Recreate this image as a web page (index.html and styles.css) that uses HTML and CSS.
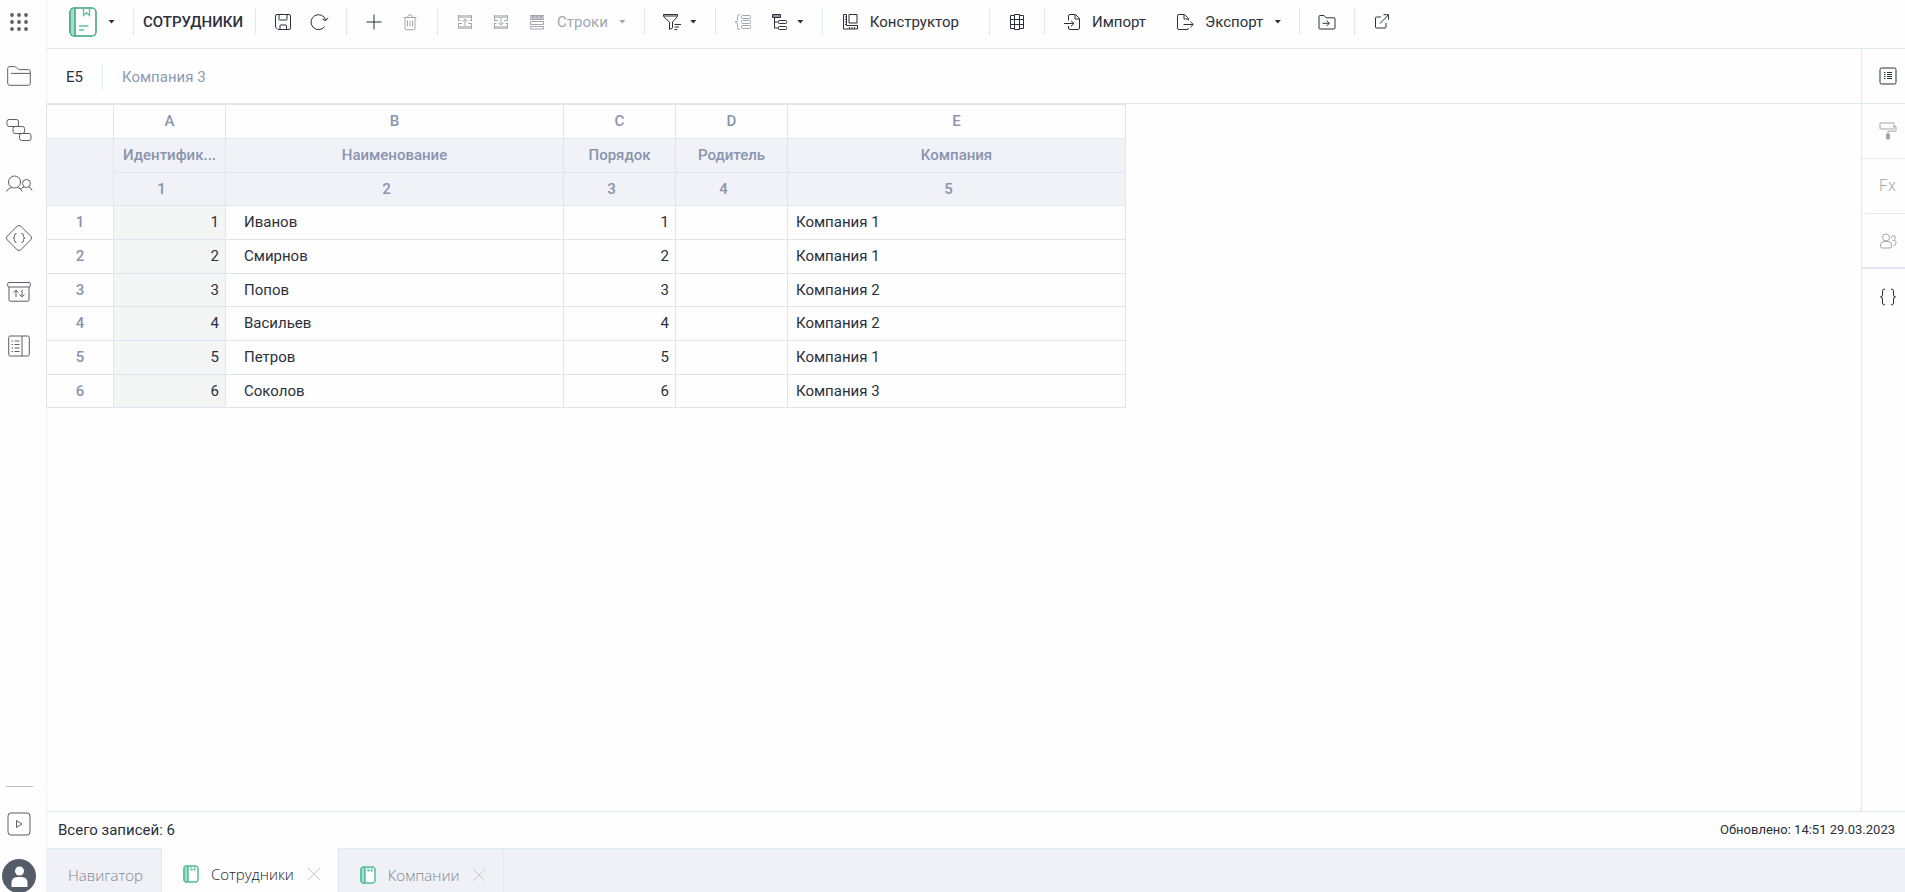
FILE: index.html
```
<!DOCTYPE html>
<html lang="ru">
<head>
<meta charset="UTF-8">
<meta name="viewport" content="width=device-width, initial-scale=1.0">
<title>Сотрудники</title>
<link rel="stylesheet" href="styles.css">
</head>
<body>
<!-- Left navigation -->
<nav class="sidebar">
<button class="side-btn side-apps" aria-label="Приложения"><svg width="18" height="18" viewBox="0 0 18 18"><circle cx="2" cy="2" r="1.9"/><circle cx="9" cy="2" r="1.9"/><circle cx="16" cy="2" r="1.9"/><circle cx="2" cy="9" r="1.9"/><circle cx="9" cy="9" r="1.9"/><circle cx="16" cy="9" r="1.9"/><circle cx="2" cy="16" r="1.9"/><circle cx="9" cy="16" r="1.9"/><circle cx="16" cy="16" r="1.9"/></svg></button>
<button class="side-btn" aria-label="Файлы"><svg width="26" height="26" viewBox="0 0 26 26"><path d="M1.7 20.3V5.6q0-2 2-2h4.500q1.200 0 2.200 1l1.300 1.200q.8.800 2 .8h8.600q2 0 2 2v11.700q0 2-2 2H3.700q-2 0-2-2zM5 10.400h19"/></svg></button>
<button class="side-btn" aria-label="Схемы"><svg width="26" height="26" viewBox="0 0 26 26"><rect x="1" y="2.500" width="11.500" height="7" rx="2"/><rect x="7" y="9.500" width="11.500" height="7" rx="2"/><rect x="13.500" y="16.500" width="11.500" height="7" rx="2"/></svg></button>
<button class="side-btn" aria-label="Пользователи"><svg width="28" height="26" viewBox="0 0 28 26"><circle cx="9.500" cy="11" r="6"/><circle cx="21.500" cy="12.500" r="4"/><path d="M1.500 20.500q1.500-3.500 5-4M12.500 16.500q3.500.5 4.700 4M15.500 18.500q1-2 3.500-2.500M24 16q2.200.8 3 3.500"/></svg></button>
<button class="side-btn" aria-label="Скрипты"><svg width="28" height="28" viewBox="0 0 28 28"><path d="M12.200 2.200q1.800-1.600 3.600 0l10 10q1.600 1.800 0 3.600l-10 10q-1.800 1.600-3.600 0l-10-10q-1.600-1.800 0-3.600z"/><path d="M11.500 9.500q-2 0-2 1.700v1.300q0 1.500-1.500 1.500 1.500 0 1.500 1.500v1.300q0 1.700 2 1.700M16.500 9.500q2 0 2 1.700v1.300q0 1.500 1.500 1.500-1.500 0-1.500 1.500v1.300q0 1.700-2 1.700"/></svg></button>
<button class="side-btn" aria-label="Обмен"><svg width="26" height="26" viewBox="0 0 26 26"><rect x="1.700" y="3.500" width="22.600" height="4.500" rx="1.200"/><path d="M3 8v13q0 1.200 1.200 1.200h17.600q1.200 0 1.200-1.200V8M10 18v-6.500M7.500 13.500l2.500-2.300 2.500 2.300M16 11v6.500M13.500 15.500l2.500 2.300 2.500-2.300"/></svg></button>
<button class="side-btn" aria-label="Справочник"><svg width="26" height="26" viewBox="0 0 26 26"><rect x="2.700" y="3" width="20.600" height="20" rx="1.500"/><path d="M16 3v20"/><path d="M5.500 8h1.500M8.500 8h5M5.500 11.500h1.500M8.500 11.500h5M5.500 15h1.500M8.500 15h5M5.500 18.500h1.500M8.500 18.500h5"/></svg></button>
<div class="side-bottom">
<button class="side-btn side-play" aria-label="Запуск"><svg width="24" height="24" viewBox="0 0 24 24"><rect x="1" y="1" width="22" height="22" rx="3"/><path d="M9.500 8.500v7l5.500-3.500z"/></svg></button>
<button class="avatar" aria-label="Профиль"><svg width="34" height="34" viewBox="0 0 34 34"><circle cx="17" cy="17" r="17" fill="#545c68"/><circle cx="17.500" cy="12" r="4.500" fill="#fff"/><path d="M9.500 28v-4q0-6 6-6h4q6 0 6 6v4z" fill="#fff"/></svg></button>
</div>
</nav>

<div class="app">
<header class="toolbar">
<button class="tool logo" aria-label="Справочник"><svg width="28" height="30" viewBox="0 0 28 30"><rect x="1" y="1" width="26" height="28" rx="4" fill="#fff"/><path d="M5 1h1v28H5q-4 0-4-4V5q0-4 4-4z" fill="#9ee0c8"/><g fill="none" stroke="#5cc3a0" stroke-width="1.400"><rect x="1" y="1" width="26" height="28" rx="4"/><path d="M6 1v28M14.500 1v7.500l3-2.700 3 2.700V1M10 19h9.500M10 23h5"/></g></svg><i class="caret"></i></button>
<span class="sep"></span>
<h1 class="title">СОТРУДНИКИ</h1>
<span class="sep"></span>
<div class="group">
<button class="tool icon" aria-label="Сохранить"><svg width="18" height="18" viewBox="0 0 18 18"><path d="M3 1.500h12q1.500 0 1.500 1.500v12q0 1.500-1.500 1.500H4L1.500 14V3q0-1.500 1.500-1.500zM5 1.500v5q0 .5.500.5h7q.5 0 .5-.5v-5M6 16.500v-4q0-.5.500-.5h5.500q.5 0 .5.500v4"/></svg></button>
<button class="tool icon" aria-label="Обновить"><svg width="20" height="18" viewBox="0 0 20 18"><path d="M15.500 13.700a7.500 7.500 0 1 1 1.200-6.700M13.500 6.200l3.300 1.500 2.200-3"/></svg></button>
</div>
<span class="sep"></span>
<div class="group">
<button class="tool icon" aria-label="Добавить"><svg width="18" height="18" viewBox="0 0 18 18"><path d="M9 1.500v15M1.500 9h15"/></svg></button>
<button class="tool icon off" disabled aria-label="Удалить"><svg width="18" height="18" viewBox="0 0 18 18"><path d="M2.500 4.500h13M4 4.500v11q0 1.200 1.200 1.200h7.600q1.200 0 1.200-1.200v-11M6.500 4.500q0-2.800 2.500-2.800t2.500 2.800M6.500 7.500v6M9 7.500v6M11.500 7.500v6"/></svg></button>
</div>
<span class="sep"></span>
<div class="group">
<button class="tool icon off" disabled aria-label="Вставить выше"><svg width="18" height="18" viewBox="0 0 18 18"><path d="M2 3.500h14M2 14.500h14" stroke="#c6c8ce" stroke-width="3"/><path d="M9 13V6M6.500 8.500L9 6l2.500 2.500M2 7.500h2.500M2 10.500h4M13.500 7.500H16M12 10.500h4M2.500 2v5M15.500 2v5M2.500 11v5M15.500 11v5"/></svg></button>
<button class="tool icon off" disabled aria-label="Вставить ниже"><svg width="18" height="18" viewBox="0 0 18 18"><path d="M2 3.500h14M2 14.500h14" stroke="#c6c8ce" stroke-width="3"/><path d="M9 5v7M6.500 9.500L9 12l2.500-2.500M2 7.500h4M2 10.500h2.500M12 7.500h4M13.500 10.500H16M2.500 2v5M15.500 2v5M2.500 11v5M15.500 11v5"/></svg></button>
<button class="tool off" disabled><svg width="18" height="18" viewBox="0 0 18 18"><path d="M2 2h14v4H2z" fill="#c6c8ce" stroke="none"/><path d="M2 2.500h14M2 6.500h14M4 3l1 2 1-2M8 3l1 2 1-2M12 3l1 2 1-2M2.500 8.500h13v3h-13zM2.500 13.500h13v2.500h-13z"/></svg>Строки<i class="caret"></i></button>
</div>
<span class="sep"></span>
<div class="group">
<button class="tool drop" aria-label="Фильтр"><svg width="18" height="18" viewBox="0 0 18 18"><path d="M1 2h13v2H1z" fill="#9095a0" stroke="none"/><path d="M.5 1.500h14v2l-5 5.500v6l-3 1.500V9l-6-5.500zM11.500 11.500H18M11.500 14h4.500M11.500 16.500h2.500"/></svg><i class="caret"></i></button>
</div>
<span class="sep"></span>
<div class="group">
<button class="tool icon off" disabled aria-label="Группировка"><svg width="18" height="18" viewBox="0 0 18 18"><path d="M6 1.500q-2.500 0-2.500 2V7q0 2-2.500 2 2.500 0 2.500 2v3.500q0 2 2.500 2"/><rect x="7.500" y="2.500" width="9" height="3" rx="1"/><rect x="7.500" y="7.500" width="9" height="3" rx="1"/><rect x="7.500" y="12.500" width="9" height="3" rx="1"/></svg></button>
<button class="tool drop" aria-label="Дерево"><svg width="18" height="18" viewBox="0 0 18 18"><path d="M3 2h7v2H3z" fill="#9095a0" stroke="none"/><path d="M2.500 1.500h8v3h-8zM4.500 4.500V15H8M4.500 9H8"/><rect x="8.500" y="7.500" width="8" height="3" rx=".8"/><rect x="8.500" y="13.500" width="8" height="3" rx=".8"/></svg><i class="caret"></i></button>
</div>
<span class="sep"></span>
<div class="group">
<button class="tool wide"><svg width="18" height="18" viewBox="0 0 18 18"><path d="M2.500 1.500h3v11h11v3.500h-14zM8 1.500h8v8.500H8z"/><path d="M4 4h1.500M4 6.500h1.500M4 9h1.500M4 11.500h1.500M8.500 14v2M11 14v2M13.500 14v2"/></svg>Конструктор</button>
</div>
<span class="sep"></span>
<div class="group">
<button class="tool icon" aria-label="Таблица"><svg width="18" height="18" viewBox="0 0 18 18"><path d="M6.500 1.500h5v15h-5zM6.500 2.500h-4v13h4M11.500 2.500h4v13h-4M2.500 6.500h13M2.500 11.500h13"/></svg></button>
</div>
<span class="sep"></span>
<div class="group">
<button class="tool wide"><svg width="18" height="18" viewBox="0 0 18 18"><path d="M5.500 7.500V3q0-1.500 1.500-1.500h5.500l4 4V15q0 1.500-1.500 1.500H7q-1.500 0-1.500-1.500v-2M12 1.500V6h4.500M1 10.500h9.500M8 7.700l3 2.800-3 2.800"/></svg>Импорт</button>
<button class="tool"><svg width="18" height="18" viewBox="0 0 18 18"><path d="M12.500 7.500v-2l-4-4H3Q1.500 1.500 1.500 3v12q0 1.500 1.500 1.500h8q1.500 0 1.500-1.500M8 1.500V6h4.500M7.500 11.500h9.500M14.300 8.700l3 2.800-3 2.800"/></svg>Экспорт<i class="caret"></i></button>
</div>
<span class="sep"></span>
<div class="group">
<button class="tool icon" aria-label="Переместить"><svg width="18" height="18" viewBox="0 0 18 18"><path d="M1 15V3.500q0-1 1-1h4l2 2.300h8q1 0 1 1V15q0 1-1 1H2q-1 0-1-1zM4.500 10.300h6.500M8.500 7.500l2.800 2.800-2.800 2.800"/></svg></button>
</div>
<span class="sep"></span>
<div class="group">
<button class="tool icon" aria-label="Открыть в новом окне"><svg width="18" height="18" viewBox="0 0 18 18"><path d="M8 4H3.500Q2.500 4 2.500 5v9q0 1 1 1H12q1 0 1-1v-4M7 10.500l8.500-8.700M10.500 1.700h5v5"/></svg></button>
</div>
</header>

<div class="workspace">
<main class="main">
<div class="formula">
<span class="cell-ref">E5</span>
<span class="cell-value">Компания 3</span>
</div>
<div class="sheet">
<table>
<colgroup><col class="c-num"><col class="c-s"><col class="c-l"><col class="c-s"><col class="c-s"><col class="c-l"></colgroup>
<thead>
<tr class="letters"><th></th><th>A</th><th>B</th><th>C</th><th>D</th><th>E</th></tr>
<tr><th rowspan="2"></th><th>Идентифик...</th><th>Наименование</th><th>Порядок</th><th>Родитель</th><th>Компания</th></tr>
<tr class="order"><th>1</th><th>2</th><th>3</th><th>4</th><th>5</th></tr>
</thead>
<tbody>
<tr><th>1</th><td class="num key">1</td><td class="name">Иванов</td><td class="num">1</td><td></td><td>Компания 1</td></tr>
<tr><th>2</th><td class="num key">2</td><td class="name">Смирнов</td><td class="num">2</td><td></td><td>Компания 1</td></tr>
<tr><th>3</th><td class="num key">3</td><td class="name">Попов</td><td class="num">3</td><td></td><td>Компания 2</td></tr>
<tr><th>4</th><td class="num key">4</td><td class="name">Васильев</td><td class="num">4</td><td></td><td>Компания 2</td></tr>
<tr><th>5</th><td class="num key">5</td><td class="name">Петров</td><td class="num">5</td><td></td><td>Компания 1</td></tr>
<tr><th>6</th><td class="num key">6</td><td class="name">Соколов</td><td class="num">6</td><td></td><td>Компания 3</td></tr>
</tbody>
</table>
</div>
</main>
<aside class="panel">
<button class="panel-btn" aria-label="Свойства"><svg width="18" height="18" viewBox="0 0 18 18"><rect x="1" y="1" width="16" height="16" rx="1.500"/><path d="M5 5.500h1.500M8 5.500h5M5 7.500h1.500M8 7.500h5M5 9.500h1.500M8 9.500h5M5 11.500h1.500M8 11.500h5"/></svg></button>
<button class="panel-btn off" disabled aria-label="Формат"><svg width="18" height="18" viewBox="0 0 18 18"><rect x="1" y="1" width="14" height="6" rx=".5"/><path d="M15 4.500h2v4.700H9v2.300"/><path d="M7.500 12h3v5h-3z" fill="currentColor"/></svg></button>
<button class="panel-btn off" disabled>Fx</button>
<button class="panel-btn off" disabled aria-label="Доступ"><svg width="18" height="18" viewBox="0 0 18 18"><circle cx="7" cy="5.500" r="3.500"/><path d="M1.500 14.500V13q0-3.500 3.500-3.500h4q3.500 0 3.500 3.500v1.500q0 1.500-1.500 1.500H3q-1.500 0-1.500-1.500zM12.500 6a2 2 0 1 1 2.500 1.500M13.500 8.500q3.500-1 3.500 2.500 0 2.500-2.500 2.500"/></svg></button>
<button class="panel-btn" aria-label="Код"><svg width="18" height="18" viewBox="0 0 18 18"><path d="M6 1q-2.500 0-2.500 2v4q0 2-2 2 2 0 2 2v4q0 2 2.500 2M12 1q2.500 0 2.500 2v4q0 2 2 2-2 0-2 2v4q0 2-2.500 2"/></svg></button>
</aside>
</div>

<div class="status">
<span>Всего записей: 6</span>
<span class="updated">Обновлено: 14:51 29.03.2023</span>
</div>

<!-- Open documents -->
<div class="tabs">
<div class="tab"><a href="#">Навигатор</a></div>
<div class="tab active"><a href="#"><svg width="16" height="18" viewBox="0 0 16 18"><rect x="1" y="1" width="14" height="16" rx="2" fill="#fff"/><path d="M3 1h2v16H3q-2 0-2-2V3q0-2 2-2z" fill="#9ee0c8"/><path d="M8 1v4.500l2-1.700 2 1.700V1"/><rect x="1" y="1" width="14" height="16" rx="2"/><path d="M5 1v16"/></svg>Сотрудники</a><button class="close" aria-label="Закрыть"><svg width="12" height="12" viewBox="0 0 12 12"><path d="M0 0l12 12M12 0L0 12"/></svg></button></div>
<div class="tab"><a href="#"><svg width="16" height="18" viewBox="0 0 16 18"><rect x="1" y="1" width="14" height="16" rx="2" fill="#fff"/><path d="M3 1h2v16H3q-2 0-2-2V3q0-2 2-2z" fill="#9ee0c8"/><path d="M8 1v4.500l2-1.700 2 1.700V1"/><rect x="1" y="1" width="14" height="16" rx="2"/><path d="M5 1v16"/></svg>Компании</a><button class="close" aria-label="Закрыть"><svg width="12" height="12" viewBox="0 0 12 12"><path d="M0 0l12 12M12 0L0 12"/></svg></button></div>
</div>
</div>
</body>
</html>
```
FILE: styles.css
```
* {
box-sizing: border-box;
}
body {
display: flex;
height: 100vh;
margin: 0;
overflow: hidden;
background-color: #fefefe;
color: #2b303b;
font-family: Roboto, "Noto Sans", sans-serif;
font-size: 15px;
line-height: 20px;
}
button {
display: flex;
align-items: center;
justify-content: center;
padding: 0;
border: none;
background: none;
color: inherit;
font: inherit;
cursor: pointer;
}
svg {
flex: none;
fill: none;
stroke: currentColor;
}
/* Left navigation */
.sidebar {
display: flex;
flex-direction: column;
flex: none;
width: 46px;
padding-right: 8px;
color: #5c5f6a;
}
.side-btn {
height: 54px;
}
.side-apps {
height: 49px;
padding: 0 0 5px;
}
.side-apps svg {
fill: currentColor;
}
.side-apps svg,
.avatar svg {
stroke: none;
}
.side-bottom {
display: flex;
flex-direction: column;
gap: 22px;
margin-top: auto;
height: 106px;
}
.side-play {
flex: none;
height: 50px;
padding-top: 24px;
}
.side-bottom::before {
content: "";
flex: none;
width: 27px;
height: 1px;
margin: 0 0 -22px 6px;
background-color: #b9bdcc;
}
.avatar {
flex: none;
height: 34px;
}
.app {
display: flex;
flex-direction: column;
flex: 1;
min-width: 0;
border-left: 1px solid #eef3fa;
}
/* Toolbar */
.toolbar {
display: flex;
align-items: center;
flex: none;
height: 49px;
padding: 0 4px 5px;
border-bottom: 1px solid #dfe8f4;
}
.sep {
flex: none;
width: 1px;
height: 27px;
background-color: #dfe8f4;
}
.title {
margin: 0;
padding: 0 12px 0 9px;
font-size: 15px;
font-weight: 500;
}
.group {
display: flex;
padding: 0 9px;
}
.tool {
gap: 11px;
height: 36px;
padding: 0 9px;
white-space: nowrap;
}
.logo {
padding: 0 18px;
}
.icon {
width: 36px;
}
.drop {
gap: 9px;
}
.wide {
padding-right: 21px;
}
.off {
color: #a3a6ae;
cursor: default;
}
.caret {
width: 7px;
height: 4px;
background-color: currentColor;
clip-path: polygon(0 0, 100% 0, 50% 100%);
}
/* Workspace */
.workspace {
display: flex;
flex: 1;
min-height: 0;
}
.main {
flex: 1;
min-width: 0;
}
.formula {
display: flex;
align-items: center;
height: 54px;
padding-top: 1px;
}
.cell-ref,
.cell-value {
padding: 3px 19px;
}
.cell-value {
border-left: 1px solid #dfe8f4;
color: #8b9bb0;
}
.sheet {
border-top: 1px solid #dfe8f4;
}
table {
width: 1079px;
margin: 0 0 0 -1px;
border-collapse: collapse;
table-layout: fixed;
}
.c-num {
width: 67px;
}
.c-s {
width: 112px;
}
.c-l {
width: 338px;
}
tr {
height: 34px;
}
tr:nth-child(3n) {
height: 33px;
}
th,
td {
padding: 0 6px 1px;
overflow: hidden;
border: 1px solid #dfe3f2;
text-align: left;
text-overflow: ellipsis;
white-space: nowrap;
}
td:last-child {
padding-left: 8px;
}
th {
color: #8994ae;
font-weight: 500;
text-align: center;
}
thead th {
background-color: #f1f2f8;
}
.letters th {
background-color: #fefefe;
}
.order th {
padding-right: 22px;
}
.num {
text-align: right;
}
.key {
background-color: #f4f6f5;
}
.name {
padding-left: 18px;
}
/* Right panel */
.panel {
flex: none;
width: 44px;
border-left: 1px solid #dfe8f4;
}
.panel-btn {
width: 100%;
height: 55px;
padding-left: 8px;
border-bottom: 1px solid #dfe8f4;
font-size: 16px;
}
.panel-btn.off {
font-weight: 300;
}
.panel-btn:nth-child(4) {
border-bottom-width: 2px;
}
.panel-btn:last-child {
border-bottom: none;
}
/* Status line */
.status {
display: flex;
align-items: center;
justify-content: space-between;
flex: none;
height: 37px;
padding: 0 10px 0 11px;
border-top: 1px solid #dfe8f4;
}
.updated {
font-size: 13px;
}
/* Document tabs */
.tabs {
display: flex;
flex: none;
height: 44px;
border-top: 1px solid #dfe8f4;
background-color: #f0f1f7;
font-family: "Open Sans", "Noto Sans", sans-serif;
font-size: 15px;
font-weight: 300;
}
.tab {
display: flex;
align-items: center;
gap: 14px;
padding: 8px 18px 0 21px;
border-right: 1px solid #dfe8f4;
color: #7f8590;
}
.tab a {
display: flex;
align-items: center;
gap: 12px;
color: inherit;
text-decoration: none;
}
.tab svg {
stroke: #52bd99;
}
.tab .close svg {
stroke: #c9ccd3;
}
.active {
margin-top: -1px;
background-color: #fefefe;
color: #1c2029;
}
```
